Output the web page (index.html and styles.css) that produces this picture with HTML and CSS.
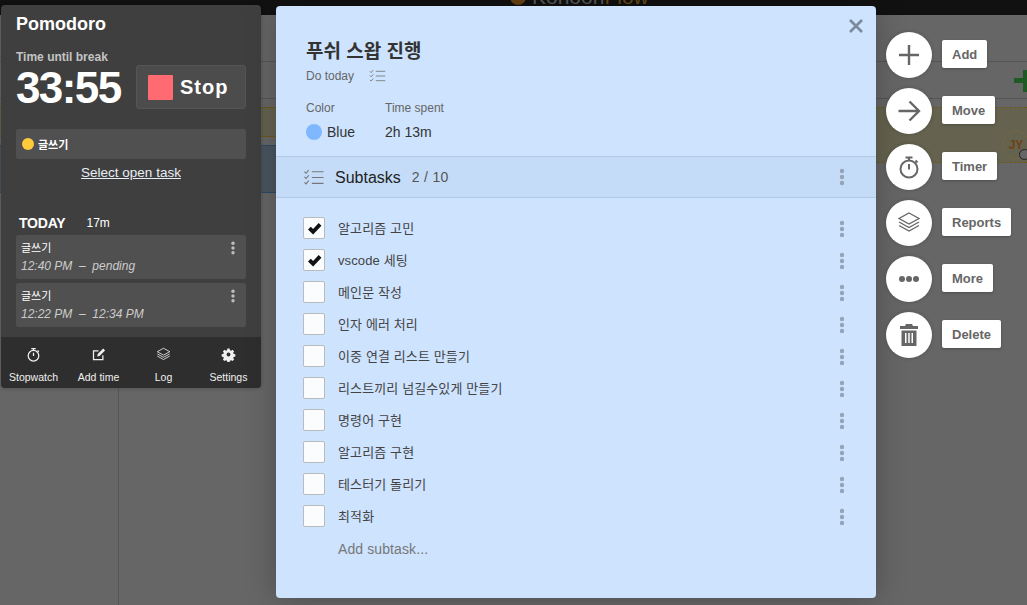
FILE: index.html
```html
<!DOCTYPE html>
<html lang="ko">
<head>
<meta charset="utf-8">
<title>Pomodoro</title>
<link rel="stylesheet" href="styles.css">
</head>
<body>
<svg width="0" height="0" class="defs">
  <symbol id="i-list" viewBox="0 0 20 16"><g fill="none" stroke="currentColor" stroke-width="1"><path d="M1 2.500l1.500 1.500L5 1M1 7.500L2.500 9 5 6M1 12.500L2.500 14 5 11"/><path d="M8 2.500h11M8 8h11M8 13.500h11"/></g></symbol>
  <symbol id="i-dots" viewBox="0 0 6 18"><g fill="currentColor"><circle cx="3" cy="3" r="2.200"/><circle cx="3" cy="9" r="2.200"/><circle cx="3" cy="15" r="2.200"/></g></symbol>
  <symbol id="i-watch" viewBox="0 0 24 24"><g fill="none" stroke="currentColor" stroke-width="2"><circle cx="12" cy="14" r="8.500"/><path d="M12 9v5.500M8.500 2.500h7M12 2.500v3M18.500 5.500l2 2"/></g></symbol>
  <symbol id="i-layers" viewBox="0 0 24 24"><g fill="none" stroke="currentColor" stroke-width="1.300"><path d="M12 2l10 5.500L12 13 2 7.500z"/><path d="M2 11l10 5.500L22 11"/><path d="M2 14.500L12 20l10-5.500"/></g></symbol>
</svg>

<div class="backdrop">
  <div class="topbar"><span class="brand-logo"></span><span class="brand">Kohoon<em>Flow</em></span></div>
  <div class="vline"></div>
  <div class="hline hline-a"></div>
  <div class="hline hline-b"></div>
  <div class="band band-yellow"></div>
  <div class="band band-blue"></div>
  <div class="band band-right"></div>
  <div class="plus-green"></div>
  <div class="avatar">JY<span class="avatar-badge"></span></div>
</div>

<aside class="pomodoro">
  <div class="pomo-body">
    <h2 class="pomo-title">Pomodoro</h2>
    <div class="pomo-label">Time until break</div>
    <div class="pomo-timer-row">
      <div class="pomo-time">33:55</div>
      <button class="stop"><span class="stop-square"></span><span>Stop</span></button>
    </div>
    <div class="current-task"><span class="yellow-dot"></span><span>글쓰기</span></div>
    <a class="select-link">Select open task</a>
    <div class="today"><strong>TODAY</strong><span>17m</span></div>
    <div class="log-card">
      <div class="log-text"><div class="log-name">글쓰기</div><div class="log-time">12:40 PM &nbsp;–&nbsp; pending</div></div>
      <svg class="log-dots"><use href="#i-dots"/></svg>
    </div>
    <div class="log-card">
      <div class="log-text"><div class="log-name">글쓰기</div><div class="log-time">12:22 PM &nbsp;–&nbsp; 12:34 PM</div></div>
      <svg class="log-dots"><use href="#i-dots"/></svg>
    </div>
  </div>
  <nav class="pomo-nav">
    <div class="nav-item"><svg class="nav-icon" viewBox="0 0 24 24"><use href="#i-watch"/></svg><span>Stopwatch</span></div>
    <div class="nav-item"><svg class="nav-icon" viewBox="0 0 24 24"><path fill="none" stroke="currentColor" stroke-width="2" d="M19 13v7H4V6h8"/><path fill="currentColor" d="M10 15l.7-3.700L19.500 2.500l3 3-8.800 8.800z"/></svg><span>Add time</span></div>
    <div class="nav-item"><svg class="nav-icon" viewBox="0 0 24 24"><use href="#i-layers"/></svg><span>Log</span></div>
    <div class="nav-item"><svg class="nav-icon" viewBox="0 0 24 24"><path fill="currentColor" fill-rule="evenodd" d="M10 1.500h4l.6 3 2 .9 2.600-1.700 2.800 2.800-1.700 2.600.9 2 3 .6v4l-3 .6-.9 2 1.700 2.600-2.800 2.800-2.600-1.700-2 .9-.6 3h-4l-.6-3-2-.9-2.600 1.700-2.800-2.800 1.700-2.600-.9-2-3-.6v-4l3-.6.9-2-1.700-2.600 2.800-2.800 2.600 1.700 2-.9zM12 8.500a3.500 3.500 0 1 0 0 7 3.500 3.500 0 0 0 0-7z" transform="translate(1.200 1.200) scale(.9)"/></svg><span>Settings</span></div>
  </nav>
</aside>

<main class="modal">
  <svg class="close" viewBox="0 0 16 16"><path d="M2 2l12 12M14 2L2 14" stroke="currentColor" stroke-width="2.600" fill="none"/></svg>
  <header class="modal-head">
    <h1 class="task-title">푸쉬 스왑 진행</h1>
    <div class="task-sub"><span>Do today</span><svg class="list-small"><use href="#i-list"/></svg></div>
    <div class="meta">
      <div class="meta-col meta-color">
        <div class="meta-label">Color</div>
        <div class="meta-value"><span class="blue-dot"></span>Blue</div>
      </div>
      <div class="meta-col">
        <div class="meta-label">Time spent</div>
        <div class="meta-value">2h 13m</div>
      </div>
    </div>
  </header>
  <div class="subtasks-head">
    <svg class="list-large"><use href="#i-list"/></svg>
    <span class="subtasks-title">Subtasks</span>
    <span class="subtasks-count">2 / 10</span>
    <svg class="row-dots"><use href="#i-dots"/></svg>
  </div>
  <ul class="subtasks">
    <li class="row"><span class="box"><svg class="check" viewBox="0 0 16 14"><path d="M1 8l3-3 2.500 2.500L12.500 1l3 3-9 9.500z" fill="currentColor"/></svg></span><span class="row-text">알고리즘 고민</span><svg class="row-dots"><use href="#i-dots"/></svg></li>
    <li class="row"><span class="box"><svg class="check" viewBox="0 0 16 14"><path d="M1 8l3-3 2.500 2.500L12.500 1l3 3-9 9.500z" fill="currentColor"/></svg></span><span class="row-text">vscode 세팅</span><svg class="row-dots"><use href="#i-dots"/></svg></li>
    <li class="row"><span class="box"></span><span class="row-text">메인문 작성</span><svg class="row-dots"><use href="#i-dots"/></svg></li>
    <li class="row"><span class="box"></span><span class="row-text">인자 에러 처리</span><svg class="row-dots"><use href="#i-dots"/></svg></li>
    <li class="row"><span class="box"></span><span class="row-text">이중 연결 리스트 만들기</span><svg class="row-dots"><use href="#i-dots"/></svg></li>
    <li class="row"><span class="box"></span><span class="row-text">리스트끼리 넘길수있게 만들기</span><svg class="row-dots"><use href="#i-dots"/></svg></li>
    <li class="row"><span class="box"></span><span class="row-text">명령어 구현</span><svg class="row-dots"><use href="#i-dots"/></svg></li>
    <li class="row"><span class="box"></span><span class="row-text">알고리즘 구현</span><svg class="row-dots"><use href="#i-dots"/></svg></li>
    <li class="row"><span class="box"></span><span class="row-text">테스터기 돌리기</span><svg class="row-dots"><use href="#i-dots"/></svg></li>
    <li class="row"><span class="box"></span><span class="row-text">최적화</span><svg class="row-dots"><use href="#i-dots"/></svg></li>
  </ul>
  <div class="add-subtask">Add subtask...</div>
</main>

<div class="actions">
  <div class="action"><span class="circle"><svg class="action-icon" viewBox="0 0 24 24"><path d="M12 2v20M2 12h20" stroke="currentColor" stroke-width="2.400" fill="none"/></svg></span><span class="action-label">Add</span></div>
  <div class="action"><span class="circle"><svg class="action-icon" viewBox="0 0 24 24"><path d="M1.500 12h20M12.500 2.500L22 12l-9.500 9.500" stroke="currentColor" stroke-width="2.400" fill="none"/></svg></span><span class="action-label">Move</span></div>
  <div class="action"><span class="circle"><svg class="action-icon action-watch" viewBox="0 0 24 24"><use href="#i-watch"/></svg></span><span class="action-label">Timer</span></div>
  <div class="action"><span class="circle"><svg class="action-icon" viewBox="0 0 24 24"><use href="#i-layers"/></svg></span><span class="action-label">Reports</span></div>
  <div class="action"><span class="circle"><svg class="action-icon" viewBox="0 0 24 24"><g fill="currentColor"><circle cx="5" cy="12" r="3"/><circle cx="12" cy="12" r="3"/><circle cx="19" cy="12" r="3"/></g></svg></span><span class="action-label">More</span></div>
  <div class="action"><span class="circle"><svg class="action-icon" viewBox="0 0 24 24"><path fill="currentColor" fill-rule="evenodd" d="M9 1h6l1 2h5v3H3V3h5zM4.500 7.500h15V23h-15zM8 10v10h1.500V10zM11.250 10v10h1.500V10zM14.500 10v10H16V10z"/></svg></span><span class="action-label">Delete</span></div>
</div>
</body>
</html>
```
FILE: styles.css
```css
* { box-sizing: border-box; }
html, body { margin: 0; padding: 0; height: 100%; overflow: hidden; }
body {
  background: #666;
  font-family: "Liberation Sans", "Noto Sans CJK KR", sans-serif;
  position: relative;
  width: 1027px;
  height: 605px;
}
.defs { position: absolute; }

/* dimmed board behind the overlay */
.backdrop { position: absolute; inset: 0; }
.topbar { position: absolute; left: 0; top: 0; right: 0; height: 15px; background: #111; overflow: hidden; }
.brand-logo { position: absolute; left: 510px; top: -11px; width: 16px; height: 16px; border-radius: 50%; background: #6a4214; }
.brand { position: absolute; left: 532px; top: -15px; font-size: 21px; color: #5c5c5c; }
.brand em { font-style: normal; color: #6a4c14; }
.vline { position: absolute; left: 118px; top: 15px; bottom: 0; width: 1px; background: #555; }
.hline { position: absolute; left: 0; right: 0; height: 1px; background: #555; }
.hline-a { top: 61px; }
.hline-b { top: 98px; }
.band { position: absolute; }
.band-yellow { left: 0; top: 107px; width: 276px; height: 30px; background: #65634f; border-top: 1px solid #6b5a1c; border-bottom: 1px solid #6b5a1c; }
.band-blue { left: 0; top: 145px; width: 276px; height: 48px; background: #4a5560; border-top: 1px solid #2d4a68; border-bottom: 1px solid #2d4a68; }
.band-right { left: 876px; right: 0; top: 107px; height: 56px; background: #65634f; border-top: 1px dashed #6b5a1c; border-bottom: 1px dashed #6b5a1c; }
.plus-green { position: absolute; left: 1014px; top: 70px; width: 13px; height: 22px; background: linear-gradient(#1f5a25, #1f5a25) 0 8px / 13px 5px no-repeat, linear-gradient(#1f5a25, #1f5a25) 9px 0 / 4px 22px no-repeat; }
.avatar { position: absolute; left: 1003px; top: 131px; width: 26px; height: 28px; border: 1px dashed #7d6a3c; border-radius: 50%; color: #6e4214; font-size: 12px; font-weight: 700; line-height: 26px; text-align: center; }
.avatar-badge { position: absolute; left: 15px; top: 17px; width: 11px; height: 11px; border-radius: 50%; background: #666; border: 1px solid #222; }

/* pomodoro panel */
.pomodoro { position: absolute; left: 1px; top: 5px; width: 260px; height: 383px; background: #3f3f3f; border-radius: 4px; display: flex; flex-direction: column; overflow: hidden; box-shadow: 0 0 4px rgba(0,0,0,.25); color: #fff; }
.pomo-body { flex: 1; padding: 9px 15px 0; }
.pomo-title { margin: 0; font-size: 18px; line-height: 20px; font-weight: 700; }
.pomo-label { margin-top: 16px; font-size: 12px; line-height: 14px; font-weight: 700; color: #c4c4c4; }
.pomo-timer-row { display: flex; align-items: flex-start; justify-content: space-between; height: 44px; margin-top: 1px; }
.pomo-time { font-size: 44px; line-height: 46px; font-weight: 700; letter-spacing: -1.600px; }
.stop { width: 110px; height: 44px; display: flex; align-items: center; gap: 7px; padding: 0 0 0 11px; background: #4c4c4c; border: 1px solid #555; border-radius: 3px; color: #fff; font: 700 20px "Liberation Sans", sans-serif; letter-spacing: 1px; }
.stop-square { width: 25px; height: 25px; background: #ff6b70; border-radius: 1px; }
.current-task { margin-top: 20px; height: 30px; display: flex; align-items: center; gap: 4px; padding-left: 6px; background: #505050; border-radius: 2px; font-size: 11px; font-weight: 700; }
.yellow-dot { width: 12px; height: 12px; border-radius: 50%; background: #ffc93c; }
.select-link { display: block; margin-top: 6px; text-align: center; font-size: 13.500px; line-height: 15px; text-decoration: underline; color: #e8edf4; }
.today { display: flex; margin: 34px 0 0 3px; height: 18px; align-items: center; gap: 21px; font-size: 12px; }
.today strong { font-size: 14px; letter-spacing: -.2px; }
.log-card { display: flex; justify-content: space-between; height: 44px; margin-top: 4px; padding: 6px 10px 0 5px; background: #505050; border-radius: 2px; }
.today + .log-card { margin-top: 3px; }
.log-name { font-size: 11px; line-height: 14px; }
.log-time { margin-top: 4px; font-size: 12px; line-height: 15px; font-style: italic; color: #ccc; }
.log-dots { width: 6px; height: 14px; margin-top: 0; color: #bbb; }
.pomo-nav { height: 51px; background: #2e2e2e; display: grid; grid-template-columns: repeat(4, 1fr); }
.nav-item { display: flex; flex-direction: column; align-items: center; padding-top: 10px; gap: 9px; font-size: 10.500px; line-height: 13px; color: #f0f0f0; }
.nav-icon { width: 15px; height: 15px; }

/* modal */
.modal { position: absolute; left: 276px; top: 6px; width: 600px; height: 592px; background: #cde3fe; border-radius: 4px; box-shadow: 0 0 30px rgba(0,0,0,.25); display: flex; flex-direction: column; color: #333; }
.close { position: absolute; right: 12px; top: 12px; width: 16px; height: 16px; color: #7a8a9c; }
.modal-head { padding: 35px 30px 0; height: 150px; }
.task-title { margin: 0; font-size: 19px; line-height: 22px; font-weight: 700; color: #333; }
.task-sub { display: flex; align-items: center; gap: 15px; margin-top: 6px; font-size: 12px; line-height: 14px; color: #666; }
.list-small { width: 17px; height: 14px; color: #777; }
.meta { display: flex; margin-top: 18px; }
.meta-color { width: 79px; }
.meta-label { font-size: 12px; line-height: 14px; color: #666; }
.meta-value { display: flex; align-items: center; gap: 5px; margin-top: 9px; height: 16px; font-size: 14px; color: #333; }
.blue-dot { width: 16px; height: 16px; border-radius: 50%; background: #7fb8ff; }
.subtasks-head { height: 42px; display: flex; align-items: center; padding: 0 31px 0 27px; background: #c5dcf8; border-top: 1px solid #b2c9e4; border-bottom: 1px solid #b2c9e4; }
.list-large { width: 22px; height: 17px; color: #777; }
.subtasks-title { margin-left: 10px; padding-top: 1px; font-size: 16px; color: #222; }
.subtasks-count { margin-left: 11px; font-size: 14px; color: #555; letter-spacing: .3px; }
.subtasks-head .row-dots { margin-left: auto; }
.row-dots { width: 6px; height: 18px; color: #94a3b6; flex: none; margin-top: 2px; }
.subtasks-head .row-dots { margin-top: 0; }
.subtasks { list-style: none; margin: 0; padding: 14px 31px 0 27px; }
.row { height: 32px; display: flex; align-items: center; }
.box { width: 22px; height: 22px; background: #fbfcfd; border: 1px solid #bbb; border-radius: 2px; display: flex; align-items: center; justify-content: center; }
.check { width: 15px; height: 13px; color: #111; }
.row-text { flex: 1; margin-left: 13px; font-size: 13px; letter-spacing: .12px; color: #444; padding-bottom: 2px; }
.add-subtask { margin: 9px 0 0 62px; font-size: 14px; letter-spacing: .1px; line-height: 17px; color: #777; }

/* action column */
.actions { position: absolute; left: 886px; top: 32px; display: flex; flex-direction: column; gap: 10px; }
.action { display: flex; align-items: center; gap: 10px; height: 46px; }
.circle { width: 46px; height: 46px; border-radius: 50%; background: #fff; display: flex; align-items: center; justify-content: center; color: #666; box-shadow: 0 0 4px rgba(0,0,0,.2); }
.action-icon { width: 24px; height: 24px; }
.action-label { height: 28px; margin-bottom: 2px; padding: 0 10px; display: flex; align-items: center; background: #fff; border-radius: 2px; box-shadow: 0 1px 3px rgba(0,0,0,.25); font-size: 13px; font-weight: 700; color: #666; }
```
